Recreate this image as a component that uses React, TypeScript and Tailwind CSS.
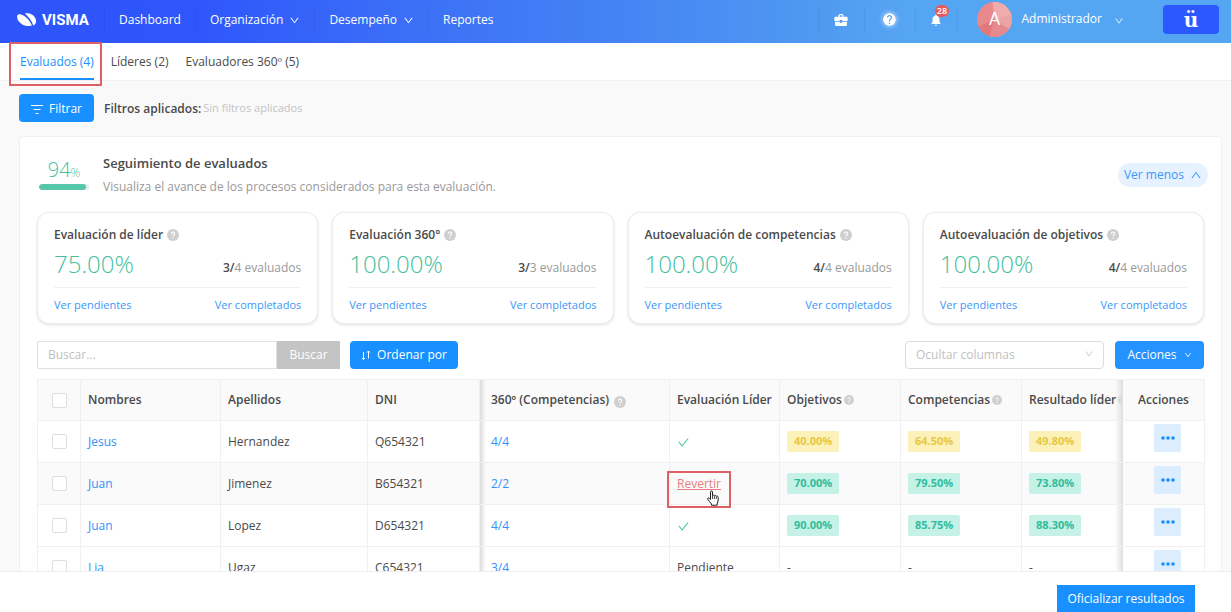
import type { ReactNode } from 'react';
import clsx from 'clsx';
import { AiOutlineCheck, AiOutlineDown, AiOutlineUp } from 'react-icons/ai';
import { MdBusinessCenter, MdHelp, MdNotifications } from 'react-icons/md';

const cards = [
  { title: 'Evaluación de líder', percent: '75.00%', done: 3, total: 4 },
  { title: 'Evaluación 360°', percent: '100.00%', done: 3, total: 3 },
  { title: 'Autoevaluación de competencias', percent: '100.00%', done: 4, total: 4 },
  { title: 'Autoevaluación de objetivos', percent: '100.00%', done: 4, total: 4 },
];

type Row = {
  name: string;
  lastName: string;
  dni: string;
  peers: string;
  leader: 'done' | 'revert' | 'pending';
  level?: 'low' | 'high';
  scores: string[];
};

const rows: Row[] = [
  { name: 'Jesus', lastName: 'Hernandez', dni: 'Q654321', peers: '4/4', leader: 'done', level: 'low', scores: ['40.00%', '64.50%', '49.80%'] },
  { name: 'Juan', lastName: 'Jimenez', dni: 'B654321', peers: '2/2', leader: 'revert', level: 'high', scores: ['70.00%', '79.50%', '73.80%'] },
  { name: 'Juan', lastName: 'Lopez', dni: 'D654321', peers: '4/4', leader: 'done', level: 'high', scores: ['90.00%', '85.75%', '88.30%'] },
  { name: 'Lia', lastName: 'Ugaz', dni: 'C654321', peers: '3/4', leader: 'pending', scores: ['-', '-', '-'] },
];

const cell = 'relative border-r border-b border-[#f0f0f0] px-[7px]';
const leftShadow =
  'after:absolute after:inset-y-0 after:left-0 after:w-1.5 after:bg-linear-to-r after:from-[#dcdcdc] after:to-transparent';
const rightShadow =
  'after:absolute after:inset-y-0 after:-left-2 after:w-2 after:bg-linear-to-l after:from-[#dfdfdf] after:to-transparent';

function Hint({ className = 'size-3' }: { className?: string }) {
  return (
    <svg viewBox="0 0 12 12" className={clsx('inline-block shrink-0', className)} aria-hidden="true">
      <circle cx="6" cy="6" r="6" fill="#cfcfcf" />
      <path d="M4.4 4.7a1.6 1.6 0 1 1 2.4 1.4c-.5.3-.8.5-.8 1.1" fill="none" stroke="#fff" strokeWidth="1.1" />
      <circle cx="6" cy="8.9" r=".7" fill="#fff" />
    </svg>
  );
}

function NavItem({ children, menu }: { children: ReactNode; menu?: boolean }) {
  return (
    <a href="#" className="flex h-[26px] items-center gap-1.5 border-l border-black/5 px-3.5">
      {children}
      {menu && <AiOutlineDown className="size-[11px]" />}
    </a>
  );
}

function Header() {
  return (
    <header className="flex h-[43px] shrink-0 items-start bg-[linear-gradient(90deg,#2e54fb_0%,#2f56fb_16%,#3b6ff7_33%,#4583f4_50%,#4f99f1_66%,#55a6f2_74%)] text-white">
      <a href="#" className="flex h-10 w-[104px] items-center gap-[5px] pl-[17px]">
        <svg viewBox="0 0 20 14" className="h-3.5 w-5" fill="#fff" aria-hidden="true">
          <path d="M.4 2C1.600.6 4.400 1 7 2.800 10.600 5.300 13.200 8.600 15 12.600 9.500 13.800 4 12 1.500 8 .2 5.800-.2 3.200.4 2Z" />
          <path d="M8 .6C12-.4 16.500 1.600 18.400 5.200 19.800 8 19 11.500 16.300 12.400 14.500 8 12 4 8 .6Z" />
        </svg>
        <span className="font-[Roboto,sans-serif] text-[15px] leading-none font-bold">VISMA</span>
      </a>
      <nav className="flex h-10 items-center">
        <NavItem>Dashboard</NavItem>
        <NavItem menu>Organización</NavItem>
        <NavItem menu>Desempeño</NavItem>
        <NavItem>Reportes</NavItem>
      </nav>

      <div className="ml-auto flex h-[39px] items-center">
        <button type="button" aria-label="Empresa" className="flex h-[26px] w-[46px] items-center justify-center border-l border-black/5">
          <MdBusinessCenter className="size-4" />
        </button>
        <button type="button" aria-label="Ayuda" className="flex h-[26px] w-[51px] items-center justify-center border-l border-black/5">
          <MdHelp viewBox="2 2 20 20" className="size-[13px] rounded-full shadow-[0_0_4px_1px_rgba(255,255,255,0.5)]" />
        </button>
        <button type="button" aria-label="Notificaciones" className="flex h-[26px] w-[43px] items-center justify-center border-x border-black/5">
          <span className="relative">
            <MdNotifications className="size-3.5" />
            <span className="absolute -top-2 left-1.5 flex h-3 w-3.5 items-center justify-center rounded-full bg-[#e9595c] text-[9px] font-semibold">
              28
            </span>
          </span>
        </button>
        <svg viewBox="0 0 36 36" className="ml-[19px] size-[35px]" aria-hidden="true">
          <defs>
            <clipPath id="avatar">
              <circle cx="18" cy="18" r="18" />
            </clipPath>
          </defs>
          <g clipPath="url(#avatar)">
            <path d="M0 0h36v36H0z" fill="#e88a8c" />
            <path d="M16 0h20v18L18 18Z" fill="#eeacae" />
            <path d="M18 18l18-5v17Z" fill="#eca3a5" />
            <path d="M18 18L0 26v10h13Z" fill="#e2777a" />
            <path d="M18 18l18 12v6H13Z" fill="#e68b8d" />
          </g>
          <text x="18" y="24" textAnchor="middle" fontSize="17" fill="#fff" fontFamily="Lato, sans-serif">
            A
          </text>
        </svg>
        <button type="button" className="ml-2.5 flex items-center gap-3 pb-0.5">
          Administrador
          <AiOutlineDown className="mt-1 size-2.5" />
        </button>
        <button
          type="button"
          className="mr-3 ml-[39px] flex h-[29px] w-14 items-center justify-center rounded-sm bg-[#2c59ff] font-[DejaVu_Serif,serif] text-xl leading-none font-bold"
        >
          ü
        </button>
      </div>
    </header>
  );
}

function Tabs() {
  return (
    <nav className="flex h-[38px] shrink-0 items-stretch gap-[17px] border-b border-[#f0f0f0] bg-white px-5">
      <a href="#" className="relative flex items-center border-b-2 border-[#1890ff] pt-0.5 text-[#1890ff]">
        Evaluados (4)
        <span className="pointer-events-none absolute -top-px -right-2 -bottom-2 -left-[11px] z-10 border-2 border-[#dd6064]" />
      </a>
      <a href="#" className="flex items-center border-b-2 border-transparent pt-0.5">Líderes (2)</a>
      <a href="#" className="flex items-center border-b-2 border-transparent pt-0.5">Evaluadores 360º (5)</a>
    </nav>
  );
}

function ProgressCard({ title, percent, done, total }: (typeof cards)[number]) {
  return (
    <article className="rounded-xl border border-[#ececec] bg-white px-4 pt-3 shadow-[0_1px_3px_rgba(0,0,0,0.12)]">
      <h3 className="flex h-5 items-center gap-1 font-semibold">
        {title}
        <Hint />
      </h3>
      <div className="flex h-[43px] items-center justify-between border-b border-[#f0f0f0] pb-1">
        <span className="text-2xl font-light text-[#45bf9e]">{percent}</span>
        <span className="mt-2 text-[#999]">
          <span className="font-semibold text-[#4a4a4a]">{done}/</span>
          {total} evaluados
        </span>
      </div>
      <div className="flex h-[35px] items-center justify-between text-[11px] text-[#3b97fb]">
        <a href="#">Ver pendientes</a>
        <a href="#">Ver completados</a>
      </div>
    </article>
  );
}

function Summary() {
  return (
    <section>
      <div className="flex h-[60px] items-center pl-0.5">
        <div className="w-[50px] shrink-0 pb-1">
          <p className="text-center text-xl leading-7 font-light text-[#45bf9e]">
            94<span className="text-xs">%</span>
          </p>
          <div className="h-1.5 overflow-hidden rounded-full bg-[#e9e9e9]">
            <div className="h-full w-[94%] rounded-full bg-[#57c7a9]" />
          </div>
        </div>
        <div className="ml-3.5">
          <h2 className="text-[13px] leading-6 font-semibold">Seguimiento de evaluados</h2>
          <p className="leading-6 text-[#999]">Visualiza el avance de los procesos considerados para esta evaluación.</p>
        </div>
        <button
          type="button"
          className="-mr-1 ml-auto flex h-6 items-center gap-1.5 rounded-full bg-[#e6f2ff] px-1.5 text-[#3b97fb]"
        >
          Ver menos
          <AiOutlineUp className="size-3" />
        </button>
      </div>
      <div className="mt-[7px] grid grid-cols-4 gap-3.5">
        {cards.map((card) => (
          <ProgressCard key={card.title} {...card} />
        ))}
      </div>
    </section>
  );
}

function Toolbar() {
  return (
    <div className="mt-[17px] flex h-7 items-stretch">
      <input
        type="text"
        aria-label="Buscar"
        placeholder="Buscar..."
        className="w-60 rounded-l-xs border border-[#e0e0e0] px-2.5 outline-none placeholder:text-[#bfbfbf]"
      />
      <button type="button" className="w-[63px] bg-[#c4c4c4] text-white">Buscar</button>
      <button type="button" className="ml-2.5 flex w-[108px] items-center justify-center gap-1.5 rounded-sm bg-[#1890ff] text-white">
        <svg viewBox="0 0 10 12" className="h-3 w-2.5" fill="none" stroke="#fff" aria-hidden="true">
          <path d="M2.500 3v7.500M1 9l1.500 1.500L4 9M7.500 9.500V2M6 3.500L7.500 2 9 3.500" />
        </svg>
        Ordenar por
      </button>
      <div className="relative ml-auto w-[199px]">
        <select
          aria-label="Ocultar columnas"
          className="h-full w-full appearance-none rounded-sm border border-[#dcdcdc] bg-white px-2.5 text-[#bfbfbf] outline-none"
        >
          <option>Ocultar columnas</option>
        </select>
        <AiOutlineDown className="pointer-events-none absolute top-2 right-2.5 size-2.5 text-[#bfbfbf]" />
      </div>
      <button type="button" className="ml-[11px] flex w-[89px] items-center justify-center gap-[7px] rounded-sm bg-[#2492ff] text-white">
        Acciones
        <AiOutlineDown className="size-2" />
      </button>
    </div>
  );
}

function Check({ label }: { label: string }) {
  return (
    <input
      type="checkbox"
      aria-label={label}
      className="mx-auto block size-[15px] appearance-none rounded-xs border border-[#dedede] bg-white"
    />
  );
}

function LeaderStatus({ status }: { status: Row['leader'] }) {
  if (status === 'done') return <AiOutlineCheck className="mt-0.5 size-[13px] text-[#43c3a2]" />;
  if (status === 'pending') return <>Pendiente</>;

  return (
    <span className="relative inline-block">
      <a href="#" className="text-[#e57f82] underline">Revertir</a>
      <span className="pointer-events-none absolute -top-[5px] -right-2.5 -bottom-4 -left-2.5 z-10 border-2 border-[#dd6064]" />
      <svg viewBox="0 0 12 16" className="absolute top-3.5 left-[30px] z-10 h-4 w-3" aria-hidden="true">
        <path
          d="M3.500 9.500V2c0-1.500 2-1.500 2 0v3.500c.5-.8 1.800-.6 1.900.3.500-.6 1.700-.4 1.900.5.700-.5 1.900-.2 1.900 1V10c0 1.500-1 2.500-1 4v1.200H4.500V14C3.300 12.800 2 10.800.8 9.300.200 8.300 1.500 7.400 2.400 8.300Z"
          fill="#fff"
          stroke="#222"
        />
        <path d="M5.500 5.500V9M7.400 6v3M9.300 6.500V9" stroke="#222" strokeWidth=".8" />
      </svg>
    </span>
  );
}

function Score({ value, level }: { value: string; level: Row['level'] }) {
  if (!level) return <>{value}</>;

  return (
    <span
      className={clsx(
        'inline-flex h-[21px] items-center rounded-xs px-[7px] text-[11px] font-bold',
        level === 'low' ? 'bg-[#fcf1b9] text-[#e8c840]' : 'bg-[#c6f1e7] text-[#2fbd9b]',
      )}
    >
      {value}
    </span>
  );
}

function People() {
  return (
    <table className="mt-2.5 w-full table-fixed border-separate border-spacing-0 border-t border-l border-[#f0f0f0] text-left whitespace-nowrap">
      <colgroup>
        <col className="w-[43px]" />
        <col className="w-[140px]" />
        <col className="w-[147px]" />
        <col className="w-[112px]" />
        <col className="w-[190px]" />
        <col className="w-[110px]" />
        <col className="w-[121px]" />
        <col className="w-[121px]" />
        <col className="w-[101px]" />
        <col className="w-[82px]" />
      </colgroup>
      <thead>
        <tr className="h-[41px] bg-[#fafafa] *:font-semibold">
          <th className={cell}><Check label="Seleccionar todos" /></th>
          <th className={cell}>Nombres</th>
          <th className={cell}>Apellidos</th>
          <th className={cell}>DNI</th>
          <th className={clsx(cell, leftShadow, 'pl-[11px]')}>
            <span className="flex items-center gap-[5px]">360º (Competencias) <Hint className="mt-1 size-3" /></span>
          </th>
          <th className={cell}>Evaluación Líder</th>
          <th className={cell}><span className="flex items-center gap-0.5">Objetivos <Hint className="size-2.5" /></span></th>
          <th className={cell}><span className="flex items-center gap-0.5">Competencias <Hint className="size-2.5" /></span></th>
          <th className={clsx(cell, 'overflow-hidden border-r-0 pr-0')}>
            <span className="flex items-center gap-0.5">Resultado líder <Hint className="size-2.5" /></span>
          </th>
          <th className={clsx(cell, rightShadow, 'text-center')}>Acciones</th>
        </tr>
      </thead>
      <tbody>
        {rows.map((row) => (
          <tr key={row.dni} className={clsx('h-[42px]', row.leader === 'revert' && 'bg-[#fafafa]')}>
            <td className={cell}><Check label={`Seleccionar ${row.name} ${row.lastName}`} /></td>
            <td className={cell}><a href="#" className="text-[#2f93fc]">{row.name}</a></td>
            <td className={cell}>{row.lastName}</td>
            <td className={cell}>{row.dni}</td>
            <td className={clsx(cell, leftShadow, 'pl-[11px]')}><a href="#" className="text-[#2f93fc]">{row.peers}</a></td>
            <td className={cell}><LeaderStatus status={row.leader} /></td>
            {row.scores.map((score, i) => (
              <td key={i} className={clsx(cell, i === 2 && 'border-r-0')}><Score value={score} level={row.level} /></td>
            ))}
            <td className={clsx(cell, rightShadow)}>
              <button
                type="button"
                aria-label="Más acciones"
                className="mr-4 mb-2 ml-auto flex h-7 w-[27px] items-center justify-center rounded-xs bg-[#dcedff]"
              >
                <svg viewBox="0 0 14 4" className="h-1 w-3.5" fill="#1890ff" aria-hidden="true">
                  <circle cx="2" cy="2" r="1.800" />
                  <circle cx="7" cy="2" r="1.800" />
                  <circle cx="12" cy="2" r="1.800" />
                </svg>
              </button>
            </td>
          </tr>
        ))}
      </tbody>
    </table>
  );
}

export default function App() {
  return (
    <div className="flex h-screen flex-col overflow-hidden bg-[#f9f9f9] font-[Open_Sans,sans-serif] text-xs text-[#4a4a4a]">
      <Header />
      <Tabs />
      <main className="min-h-0 flex-1 overflow-hidden pt-[13px] pr-[9px] pl-[19px]">
        <div className="flex h-7 items-center">
          <button type="button" className="flex h-full w-[75px] items-center justify-center gap-1.5 rounded-sm bg-[#1890ff] pt-0.5 text-white">
            <svg viewBox="0 0 12 10" className="h-2.5 w-3" stroke="#fff" aria-hidden="true">
              <path d="M0 1.500h12M2.500 5.500h7M4.500 9.500h3" />
            </svg>
            Filtrar
          </button>
          <span className="ml-2.5 pt-0.5 font-semibold">Filtros aplicados:</span>
          <span className="ml-0.5 text-[11px] text-[#c4c4c4]">Sin filtros aplicados</span>
        </div>
        <div className="mt-3.5 rounded-sm border border-[#f0f0f0] bg-white px-[17px] pt-2 pb-6">
          <Summary />
          <Toolbar />
          <People />
        </div>
      </main>
      <footer className="flex h-[41px] shrink-0 items-end justify-end border-t border-[#eeeeee] bg-white pr-9">
        <button type="button" className="h-[27px] w-[138px] bg-[#1890ff] text-white">Oficializar resultados</button>
      </footer>
    </div>
  );
}
